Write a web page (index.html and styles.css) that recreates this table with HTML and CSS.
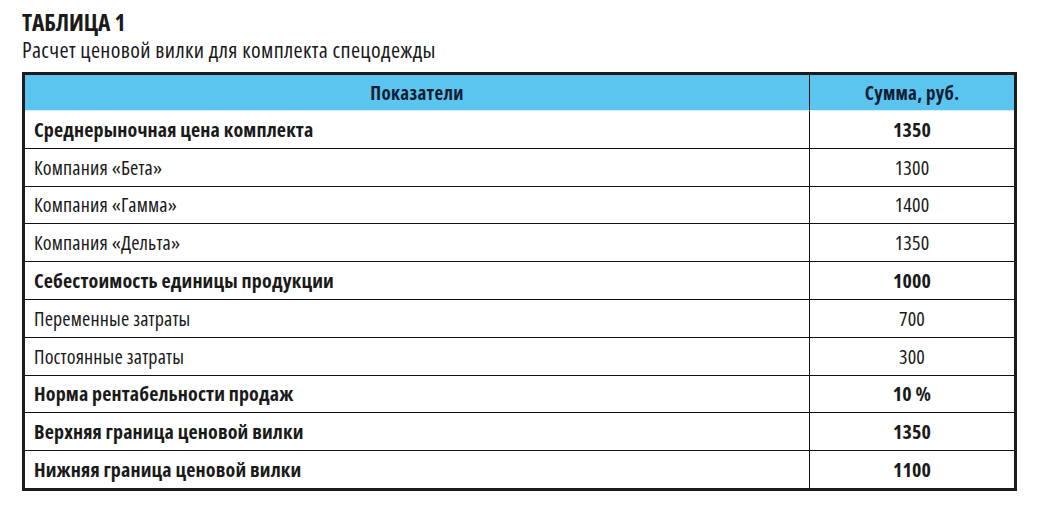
FILE: index.html
```html
<!DOCTYPE html>
<html lang="ru">
<head>
<meta charset="utf-8">
<title>Таблица 1</title>
<link rel="stylesheet" href="styles.css">
</head>
<body>
<div class="page">
  <h1 class="title">ТАБЛИЦА 1</h1>
  <p class="subtitle">Расчет ценовой вилки для комплекта спецодежды</p>
  <table class="data">
    <thead>
      <tr>
        <th class="c-name">Показатели</th>
        <th class="c-sum">Сумма, руб.</th>
      </tr>
    </thead>
    <tbody>
      <tr class="bold first"><td class="c-name">Среднерыночная цена комплекта</td><td class="c-sum">1350</td></tr>
      <tr><td class="c-name">Компания «Бета»</td><td class="c-sum">1300</td></tr>
      <tr><td class="c-name">Компания «Гамма»</td><td class="c-sum">1400</td></tr>
      <tr><td class="c-name">Компания «Дельта»</td><td class="c-sum">1350</td></tr>
      <tr class="bold"><td class="c-name">Себестоимость единицы продукции</td><td class="c-sum">1000</td></tr>
      <tr><td class="c-name">Переменные затраты</td><td class="c-sum">700</td></tr>
      <tr><td class="c-name">Постоянные затраты</td><td class="c-sum">300</td></tr>
      <tr class="bold"><td class="c-name">Норма рентабельности продаж</td><td class="c-sum">10 %</td></tr>
      <tr class="bold"><td class="c-name">Верхняя граница ценовой вилки</td><td class="c-sum">1350</td></tr>
      <tr class="bold"><td class="c-name">Нижняя граница ценовой вилки</td><td class="c-sum">1100</td></tr>
    </tbody>
  </table>
</div>
</body>
</html>
```
FILE: styles.css
```css
html, body {
  margin: 0;
  padding: 0;
  background: #ffffff;
}

body {
  font-family: "Open Sans", "Liberation Sans", sans-serif;
  font-stretch: 75%;
  color: #1a1a1a;
}

.page {
  padding: 7.5px 0 0 22px;
  width: 995px;
}

.title {
  margin: 0;
  font-size: 23.5px;
  line-height: 28.5px;
  font-weight: 700;
  letter-spacing: -0.1px;
  color: #1a1a1a;
}

.subtitle {
  margin: 0;
  font-size: 22px;
  line-height: 26px;
  font-weight: 400;
  letter-spacing: 0.35px;
  color: #1a1a1a;
}

.data {
  margin-top: 10px;
  width: 995px;
  border: 3px solid #1c1c1c;
  border-collapse: separate;
  border-spacing: 0;
}

.data th {
  height: 35px;
  padding: 0;
  background: #5bc5f0;
  color: #0f1c33;
  font-size: 19px;
  font-weight: 700;
  letter-spacing: 0.3px;
  text-align: center;
  vertical-align: middle;
}

.data th.c-sum {
  border-left: 1px solid #111;
}

.data tbody tr {
  height: 37.8px;
}

.data td {
  padding: 0;
  border-top: 1px solid #111;
  font-size: 20px;
  letter-spacing: 0.15px;
  vertical-align: middle;
  color: #1a1a1a;
}

.data tr.first td {
  border-top: 1px solid #d9eef8;
}

.data td.c-name {
  width: 775px;
  padding-left: 9px;
  text-align: left;
}

.data td.c-sum {
  border-left: 1px solid #111;
  text-align: center;
}

.data tr.bold td {
  font-weight: 700;
}
```
